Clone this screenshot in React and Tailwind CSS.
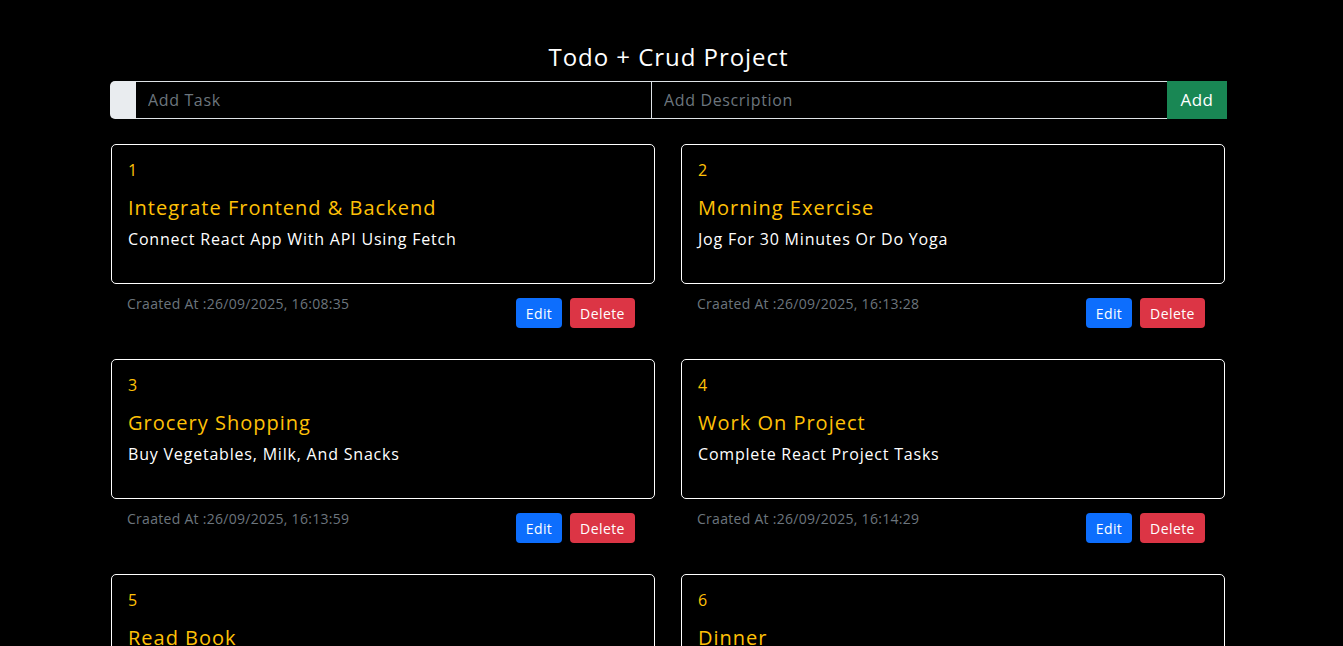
import React from 'react'

const todos = [
  { id: 1, title: 'Integrate Frontend & Backend', desc: 'Connect React App With API Using Fetch', created: '26/09/2025, 16:08:35' },
  { id: 2, title: 'Morning Exercise', desc: 'Jog For 30 Minutes Or Do Yoga', created: '26/09/2025, 16:13:28' },
  { id: 3, title: 'Grocery Shopping', desc: 'Buy Vegetables, Milk, And Snacks', created: '26/09/2025, 16:13:59' },
  { id: 4, title: 'Work On Project', desc: 'Complete React Project Tasks', created: '26/09/2025, 16:14:29' },
  { id: 5, title: 'Read Book', desc: 'Read 20 Pages Of A Novel', created: '26/09/2025, 16:15:02' },
  { id: 6, title: 'Dinner', desc: 'Cook Dinner With Family', created: '26/09/2025, 16:15:40' },
];

const TodoCard = ({ id, title, desc, created }) => {
  return (
    <div>
      <div className='h-[140px] border border-white rounded-[5px] px-4 pt-[13px]'>
        <p className='text-[#ffc107] text-base leading-6'>{id}</p>
        <h3 className='text-[#ffc107] text-[20px] leading-6 mt-[14px] tracking-[0.05em]'>{title}</h3>
        <p className='text-white text-base leading-6 mt-[7px] tracking-[0.05em]'>{desc}</p>
      </div>
      <div className='flex justify-between items-start px-4 pt-[10px] h-[75px]'>
        <p className='text-[#6c757d] text-[14px] leading-5 tracking-[0.02em]'>Craated At :{created}</p>
        <div className='flex gap-2 mt-[4px] mr-[4px]'>
          <button className='bg-[#0d6efd] text-white text-[14px] h-[30px] w-[46px] rounded-[4px] tracking-[0.03em]'>Edit</button>
          <button className='bg-[#dc3545] text-white text-[14px] h-[30px] w-[65px] rounded-[4px] tracking-[0.03em]'>Delete</button>
        </div>
      </div>
    </div>
  )
}

const App = () => {
  return (
    <div className='min-h-screen bg-black pt-[41px]' style={{ fontFamily: '"Open Sans", "Noto Sans", sans-serif' }}>
      <div className='ml-[110px] w-[1117px]'>
        <h2 className='text-white text-[24px] leading-8 text-center tracking-[0.04em]'>Todo + Crud Project</h2>
        <div className='flex h-[38px] mt-[8px]'>
          <div className='w-[26px] bg-[#e9ecef] rounded-l-[5px]'></div>
          <input className='flex-1 bg-black border-y border-[#dee2e6] px-3 text-base text-white tracking-[0.04em] placeholder-[#6c757d] outline-none' placeholder='Add Task' />
          <input className='flex-1 bg-black border-y border-l border-[#dee2e6] px-3 text-base text-white tracking-[0.04em] placeholder-[#6c757d] outline-none' placeholder='Add Description' />
          <button className='w-[60px] bg-[#198754] text-white text-[17px] tracking-[0.03em]'>Add</button>
        </div>
        <div className='grid grid-cols-[544px_544px] gap-x-[26px] pl-[1px] mt-[25px]'>
          {todos.map(todo => (
            <TodoCard key={todo.id} {...todo} />
          ))}
        </div>
      </div>
    </div>
  )
}

export default App;
